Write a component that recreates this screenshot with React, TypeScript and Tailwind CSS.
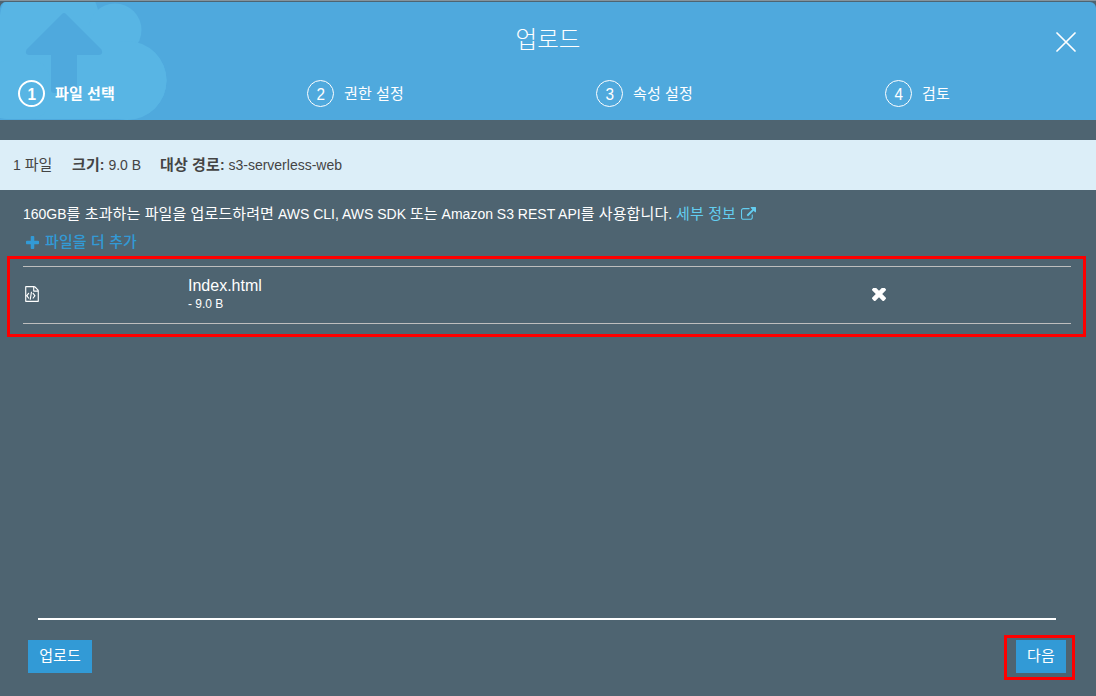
import React from "react";

const steps = [
  { n: "1", label: "파일 선택" },
  { n: "2", label: "권한 설정" },
  { n: "3", label: "속성 설정" },
  { n: "4", label: "검토" },
];

function CloudMark() {
  return (
    <svg className="absolute left-0 top-0" width="170" height="118" viewBox="0 2 170 118">
      <g fill="#58b5e4">
        <rect x="-30" y="42" width="196.500" height="77" rx="38.500" />
        <circle cx="49.500" cy="22" r="50" />
        <circle cx="115" cy="30" r="26.500" />
        <circle cx="127" cy="80.500" r="39.500" />
        <rect x="0" y="25" width="120" height="80" />
        <rect x="-10" y="60" width="60" height="59" rx="20" />
      </g>
      <path
        d="M62 14 Q64 12 66 14 L101.500 49.500 Q103.500 54.500 99 55 H77 V90 Q77 93 74 93 H54 Q51 93 51 90 V55 H29 Q24.500 54.500 26.500 49.500 Z"
        fill="#4fa9dd"
      />
    </svg>
  );
}

function Ko({ children }: { children: React.ReactNode }) {
  return <span className="text-[15px] leading-none tracking-[0.1px]">{children}</span>;
}

function Step({ n, label, active }: { n: string; label: string; active: boolean }) {
  return (
    <li className="flex h-[27px] w-[289px] shrink-0 items-center">
      <span
        className={
          active
            ? "flex size-[27px] items-center justify-center rounded-full border-2 border-white text-[17px] font-bold leading-none"
            : "flex size-[27px] items-center justify-center rounded-full border border-white text-[17px] leading-none"
        }
      >
        <span className="mt-px scale-x-90">{n}</span>
      </span>
      <span
        className={
          active
            ? "ml-2.5 text-[15px] font-bold tracking-[0.1px]"
            : "ml-2.5 text-[15px] tracking-[0.1px]"
        }
      >
        {label}
      </span>
    </li>
  );
}

export default function App() {
  return (
    <div className="h-[696px] w-[1096px] overflow-hidden bg-[#4e6471] font-['Liberation_Sans','Noto_Sans_CJK_KR',sans-serif] text-[14px] leading-5 text-white">
      <div className="h-0.5 border-t border-[#84939c]" />
      <header className="relative flex h-[118px] flex-col overflow-hidden rounded-t-[6px] bg-[#4fa9dd]">
        <CloudMark />
        <h1 className="relative mt-[22px] h-8 text-center text-[23.500px] font-light leading-8">업로드</h1>
        <button aria-label="닫기" className="absolute right-5 top-[30px]">
          <svg width="20" height="20" viewBox="0 0 20 20" fill="none" stroke="white" strokeWidth="1.700" strokeLinecap="round">
            <path d="M1 1 19 19M19 1 1 19" />
          </svg>
        </button>
        <ol className="relative mt-6 flex pl-[18px]">
          {steps.map((s, i) => (
            <Step key={s.n} n={s.n} label={s.label} active={i === 0} />
          ))}
        </ol>
      </header>

      <div className="mt-5 flex h-[50px] items-center bg-[#dceef8] pl-[13px] text-[#444]">
        <span className="w-[59px]">
          1 <Ko>파일</Ko>
        </span>
        <span className="w-[88px]">
          <b>
            <Ko>크기</Ko>:
          </b>{" "}
          9.0 B
        </span>
        <span>
          <b>
            <Ko>대상 경로</Ko>:
          </b>{" "}
          s3-serverless-web
        </span>
      </div>

      <main className="flex h-[428px] flex-col pt-3.5">
        <p className="h-5 whitespace-pre pl-[23px]">
          160GB<Ko>를 초과하는 파일을 업로드하려면</Ko> AWS CLI, AWS SDK <Ko>또는</Ko> Amazon S3 REST API
          <Ko>를 사용합니다</Ko>.{" "}
          <a className="inline-flex items-center text-[#63cdf0]">
            <Ko>세부 정보</Ko>
            <svg className="ml-[5px] mt-px" width="15" height="15" viewBox="0 0 1792 1792" fill="currentColor">
              <path d="M1408 928v320q0 119-84.500 203.500t-203.500 84.500h-832q-119 0-203.500-84.500t-84.500-203.500v-832q0-119 84.500-203.500t203.500-84.500h704q14 0 23 9t9 23v64q0 14-9 23t-23 9h-704q-66 0-113 47t-47 113v832q0 66 47 113t113 47h832q66 0 113-47t47-113v-320q0-14 9-23t23-9h64q14 0 23 9t9 23zm384-864v512q0 26-19 45t-45 19-45-19l-176-176-652 652q-10 10-23 10t-23-10l-114-114q-10-10-10-23t10-23l652-652-176-176q-19-19-19-45t19-45 45-19h512q26 0 45 19t19 45z" />
            </svg>
          </a>
        </p>
        <button className="mt-2 flex h-5 items-center pl-[25.500px] font-medium text-[#329ad6]">
          <svg className="mt-px" width="13" height="13" viewBox="0 0 1408 1408" fill="currentColor">
            <path d="M1408 608v192q0 40-28 68t-68 28H896v416q0 40-28 68t-68 28H608q-40 0-68-28t-28-68V896H96q-40 0-68-28T0 800V608q0-40 28-68t68-28h416V96q0-40 28-68t68-28h192q40 0 68 28t28 68v416h416q40 0 68 28t28 68z" />
          </svg>
          <span className="ml-[6.500px] text-[15px] tracking-[0.1px]">파일을 더 추가</span>
        </button>

        <section className="ml-[7px] mt-1 h-[81px] w-[1079px] border-[3px] border-[#f00] pl-[13px] pr-3 pt-[7px]">
          <div className="flex h-[58px] items-start border-y border-[#bebebe]">
            <svg className="ml-0.5 mt-[19px]" width="14" height="16" viewBox="128 0 1536 1792" fill="white">
              <path d="M1596 380q28 28 48 76t20 88v1152q0 40-28 68t-68 28h-1344q-40 0-68-28t-28-68v-1600q0-40 28-68t68-28h896q40 0 88 20t76 48zm-444-244v376h376q-10-29-22-41l-313-313q-12-12-41-22zm384 1528v-1024h-416q-40 0-68-28t-28-68v-416h-768v1536h1280zm-1056-896q8-11 21-12.500t24 6.500l51 38q11 8 12.500 21t-6.500 24l-182 243 182 243q8 11 6.500 24t-12.500 21l-51 38q-11 8-24 6.500t-21-12.500l-226-301q-14-19 0-38zm802 301q14 19 0 38l-226 301q-8 11-21 12.500t-24-6.500l-51-38q-11-8-12.500-21t6.500-24l182-243-182-243q-8-11-6.500-24t12.500-21l51-38q11-8 24-6.500t21 12.500zm-620 461q-13-2-20.500-13t-5.500-24l138-831q2-13 13-20.500t24-5.500l63 10q13 2 20.500 13t5.500 24l-138 831q-2 13-13 20.500t-24 5.500z" />
            </svg>
            <div className="ml-[149px] mt-[9px] w-[684px]">
              <div className="text-[16px] leading-5">Index.html</div>
              <div className="text-[12px] leading-4">- 9.0 B</div>
            </div>
            <button aria-label="삭제" className="mt-[21px]">
              <svg width="14" height="14" viewBox="302 430 1188 1188" fill="white">
                <path transform="translate(0 86)" d="M1490 1214q0 40-28 68l-136 136q-28 28-68 28t-68-28l-294-294-294 294q-28 28-68 28t-68-28l-136-136q-28-28-28-68t28-68l294-294-294-294q-28-28-28-68t28-68l136-136q28-28 68-28t68 28l294 294 294-294q28-28 68-28t68 28l136 136q28 28 28 68t-28 68l-294 294 294 294q28 28 28 68z" />
              </svg>
            </button>
          </div>
        </section>
      </main>

      <footer>
        <div className="mx-auto h-0.5 w-[1018px] -translate-x-px bg-white" />
        <div className="flex items-start justify-between pl-7 pr-[21px] pt-[15px]">
          <button className="mt-[5px] h-[33px] w-16 bg-[#329ad6] pb-px text-[15px] leading-5 tracking-[0.1px]">업로드</button>
          <div className="h-[45px] w-[71px] border-[3px] border-[#f00] pl-[9px] pt-0.5">
            <button className="h-[33px] w-[50px] bg-[#329ad6] pb-px text-[15px] leading-5 tracking-[0.1px]">다음</button>
          </div>
        </div>
      </footer>
    </div>
  );
}
